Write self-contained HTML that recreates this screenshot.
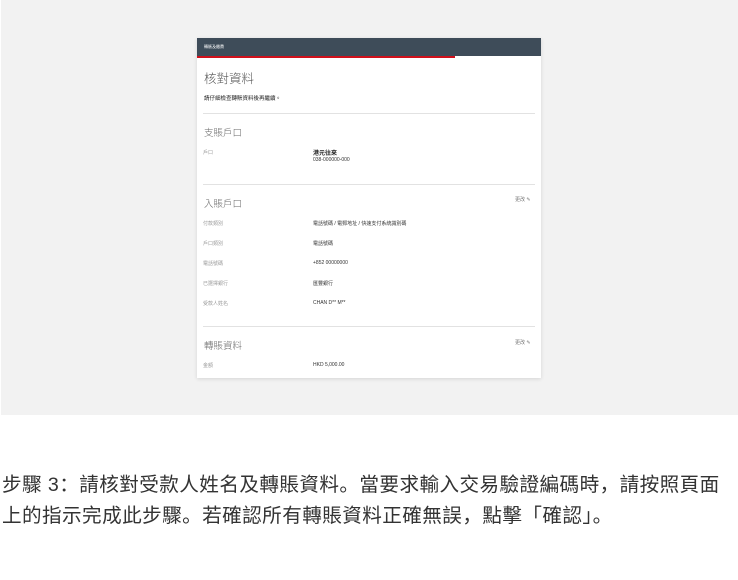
<!DOCTYPE html>
<html><head><meta charset="utf-8"><style>
body{margin:0;width:738px;height:580px;background:#fff;font-family:"Liberation Sans","Noto Sans CJK TC",sans-serif;overflow:hidden;position:relative}
.bg{position:absolute;left:1px;top:0;width:737px;height:415px;background:#f2f2f2}
.card{position:absolute;left:197px;top:38px;width:344px;height:340px;background:#fff;box-shadow:0 1px 4px rgba(0,0,0,.12)}
.hd{height:18px;background:#3e4c59;color:#fff;font-size:4px;line-height:18px;padding-left:7px}
.red{height:2px;width:258px;background:#d0101b}
.t{position:absolute;white-space:nowrap;color:#333}
.div{position:absolute;left:6px;width:332px;height:1px;background:#e2e2e2}
.sec{font-size:9.5px;color:#666;font-weight:300}
.lb{font-size:5px;color:#999;left:6px}
.v{font-size:5px;color:#333;left:116px}
.ed{font-size:5px;color:#777;left:318px}
.txt{position:absolute;left:2px;top:470px;width:736px;font-size:19.6px;letter-spacing:0.42px;line-height:31px;color:#333;font-family:"WenQuanYi Zen Hei",sans-serif;white-space:nowrap}
</style></head><body>
<div class="bg"></div>
<div class="card">
<div class="hd">轉賬及繳費</div><div class="red"></div>
<div class="t" style="left:7px;top:30px;font-size:12.5px;color:#555;font-weight:300">核對資料</div>
<div class="t" style="left:7px;top:56px;font-size:5.5px;color:#222">請仔細檢查轉賬資料後再繼續。</div>
<div class="div" style="top:75px"></div>
<div class="t sec" style="left:7px;top:87px">支賬戶口</div>
<div class="t lb" style="top:111px">戶口</div>
<div class="t" style="left:116px;top:110px;font-size:6px;font-weight:bold;color:#222">港元往來</div>
<div class="t" style="left:116px;top:119px;font-size:5px">038-000000-000</div>
<div class="div" style="top:146px"></div>
<div class="t sec" style="left:7px;top:158px">入賬戶口</div>
<div class="t ed" style="top:158px">更改 ✎</div>
<div class="t lb" style="top:182px">付款類別</div><div class="t v" style="top:182px">電話號碼 / 電郵地址 / 快速支付系統識別碼</div>
<div class="t lb" style="top:202px">戶口類別</div><div class="t v" style="top:202px">電話號碼</div>
<div class="t lb" style="top:222px">電話號碼</div><div class="t v" style="top:222px">+852 00000000</div>
<div class="t lb" style="top:242px">已選擇銀行</div><div class="t v" style="top:242px">匯豐銀行</div>
<div class="t lb" style="top:262px">受款人姓名</div><div class="t v" style="top:262px">CHAN D** M**</div>
<div class="div" style="top:288px"></div>
<div class="t sec" style="left:7px;top:300px">轉賬資料</div>
<div class="t ed" style="top:301px">更改 ✎</div>
<div class="t lb" style="top:324px">金額</div><div class="t v" style="top:324px">HKD 5,000.00</div>
</div>
<div class="txt">步驟 3：請核對受款人姓名及轉賬資料。當要求輸入交易驗證編碼時，請按照頁面<br>上的指示完成此步驟。若確認所有轉賬資料正確無誤，點擊「確認」。</div>
</body></html>
